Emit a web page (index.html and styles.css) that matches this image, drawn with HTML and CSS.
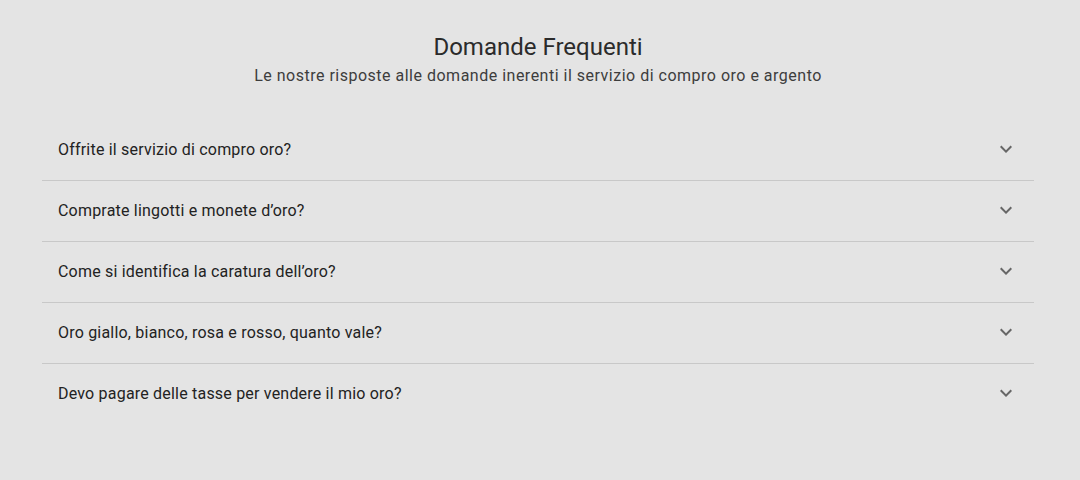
FILE: index.html
```html
<!DOCTYPE html>
<html lang="it">
<head>
<meta charset="utf-8">
<link rel="stylesheet" href="styles.css">
</head>
<body>
<section class="faq">
  <header class="faq-head">
    <h2 class="title">Domande Frequenti</h2>
    <p class="subtitle">Le nostre risposte alle domande inerenti il servizio di compro oro e argento</p>
  </header>
  <div class="list">
    <div class="item"><span class="q">Offrite il servizio di compro oro?</span><svg class="chev" viewBox="0 0 24 24"><path d="M16.59 8.59L12 13.17 7.41 8.59 6 10l6 6 6-6z"/></svg></div>
    <div class="item"><span class="q">Comprate lingotti e monete d’oro?</span><svg class="chev" viewBox="0 0 24 24"><path d="M16.59 8.59L12 13.17 7.41 8.59 6 10l6 6 6-6z"/></svg></div>
    <div class="item"><span class="q">Come si identifica la caratura dell’oro?</span><svg class="chev" viewBox="0 0 24 24"><path d="M16.59 8.59L12 13.17 7.41 8.59 6 10l6 6 6-6z"/></svg></div>
    <div class="item"><span class="q">Oro giallo, bianco, rosa e rosso, quanto vale?</span><svg class="chev" viewBox="0 0 24 24"><path d="M16.59 8.59L12 13.17 7.41 8.59 6 10l6 6 6-6z"/></svg></div>
    <div class="item"><span class="q">Devo pagare delle tasse per vendere il mio oro?</span><svg class="chev" viewBox="0 0 24 24"><path d="M16.59 8.59L12 13.17 7.41 8.59 6 10l6 6 6-6z"/></svg></div>
  </div>
</section>
</body>
</html>
```
FILE: styles.css
```css
html, body {
  margin: 0;
  padding: 0;
  background: #e4e4e4;
}
body {
  font-family: Roboto, "Liberation Sans", sans-serif;
  color: #2a2a2a;
  width: 1080px;
  height: 480px;
  overflow: hidden;
}
.faq {
  padding: 32px 46px 0 42px;
}
.faq-head {
  text-align: center;
}
.title {
  margin: 0;
  font-size: 24px;
  font-weight: 400;
  line-height: 30px;
  color: #2b2b2b;
}
.subtitle {
  margin: 1px 0 0;
  font-size: 16px;
  line-height: 26px;
  letter-spacing: 0.5px;
  color: #3d3d3d;
}
.list {
  margin-top: 31px;
}
.item {
  display: flex;
  align-items: center;
  justify-content: space-between;
  height: 58px;
  padding: 0 16px 2px 16px;
  border-bottom: 1px solid #c8c8c8;
}
.item:last-child {
  border-bottom: none;
}
.q {
  font-size: 16px;
  font-weight: 400;
  letter-spacing: 0.2px;
  color: #222;
}
.chev {
  width: 24px;
  height: 24px;
  fill: #666;
}
```
